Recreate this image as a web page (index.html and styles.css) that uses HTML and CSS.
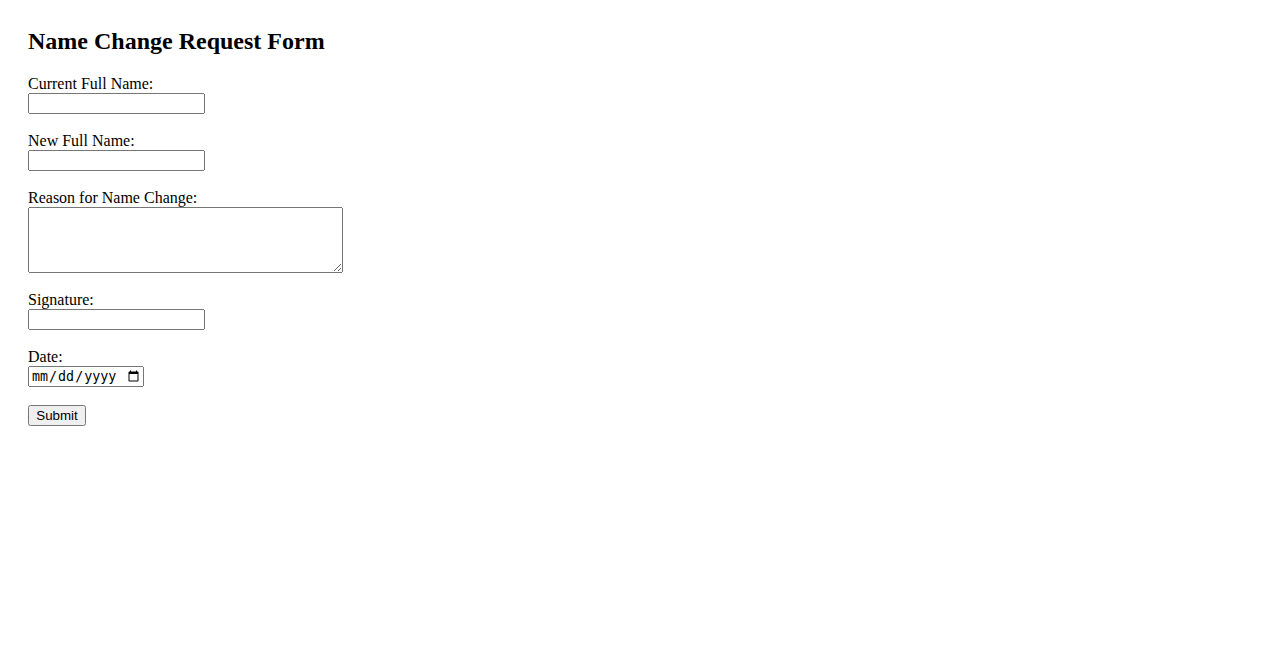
FILE: index.html
```html
<!DOCTYPE html>
<html>
<head>
<meta charset="utf-8">
<title>Name Change Request Form</title>
<link rel="stylesheet" href="styles.css">
</head>
<body>
<div class="page">
<h2 class="title">Name Change Request Form</h2>
<form class="form">
<label for="current">Current Full Name:</label><br>
<input type="text" id="current" class="field"><br><br>
<label for="new">New Full Name:</label><br>
<input type="text" id="new" class="field"><br><br>
<label for="reason">Reason for Name Change:</label><br>
<textarea id="reason" class="area" rows="4" cols="40"></textarea><br><br>
<label for="sig">Signature:</label><br>
<input type="text" id="sig" class="field"><br><br>
<label for="date">Date:</label><br>
<input type="date" id="date" class="datefield"><br><br>
<input type="submit" value="Submit" class="submit">
</form>
</div>
</body>
</html>
```
FILE: styles.css
```css
body {
  margin: 8px;
  font-family: "Liberation Serif", "Times New Roman", serif;
  font-size: 16px;
  color: #000;
  background: #fff;
}
.page {
  padding: 20px;
}
.title {
  font-size: 24px;
  font-weight: bold;
  margin: 0 0 20px 0;
}
.field {
  font-family: "Liberation Sans", Arial, sans-serif;
  box-sizing: border-box;
  width: 177px;
  height: 21px;
}
.area {
  font-family: "Liberation Mono", monospace;
  box-sizing: border-box;
  width: 315px;
  height: 66px;
  vertical-align: bottom;
}
.datefield {
  box-sizing: border-box;
  width: 116px;
  height: 21px;
}
.submit {
  font-family: "Liberation Sans", Arial, sans-serif;
  box-sizing: border-box;
  width: 58px;
  height: 21px;
}
```
